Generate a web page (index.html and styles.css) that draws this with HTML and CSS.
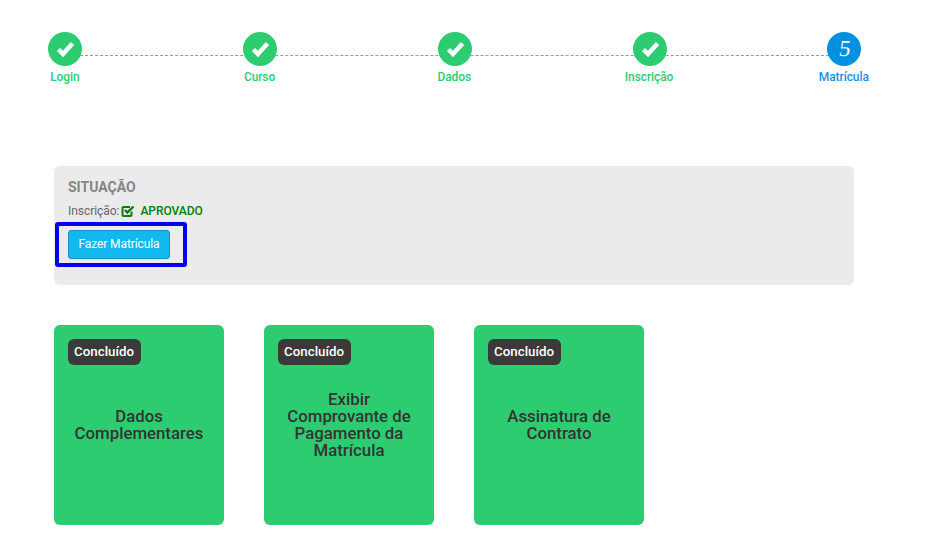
FILE: index.html
```html
<!DOCTYPE html>
<html lang="pt-BR">
<head>
    <meta charset="UTF-8">
    <meta name="viewport" content="width=device-width, initial-scale=1.0">
    <title>Matrícula</title>
    <link rel="stylesheet" href="styles.css">
</head>
<body>
    <div class="stepper">
        <div class="step done">
            <span class="step-circle">
                <svg class="check" viewBox="0 0 20 20"><path d="M3.5 10.5 L8 15 L17.5 4.5" /></svg>
            </span>
            <span class="step-label">Login</span>
        </div>
        <div class="step done">
            <span class="step-circle">
                <svg class="check" viewBox="0 0 20 20"><path d="M3.5 10.5 L8 15 L17.5 4.5" /></svg>
            </span>
            <span class="step-label">Curso</span>
        </div>
        <div class="step done">
            <span class="step-circle">
                <svg class="check" viewBox="0 0 20 20"><path d="M3.5 10.5 L8 15 L17.5 4.5" /></svg>
            </span>
            <span class="step-label">Dados</span>
        </div>
        <div class="step done">
            <span class="step-circle">
                <svg class="check" viewBox="0 0 20 20"><path d="M3.5 10.5 L8 15 L17.5 4.5" /></svg>
            </span>
            <span class="step-label">Inscrição</span>
        </div>
        <div class="step current">
            <span class="step-circle"><span class="step-number">5</span></span>
            <span class="step-label">Matrícula</span>
        </div>
    </div>

    <div class="situacao">
        <h3>SITUAÇÃO</h3>
        <p class="inscricao">
            Inscrição:
            <svg class="check-square" viewBox="0 0 14 14">
                <path class="box" d="M10.5 7.5 V11 a1 1 0 0 1 -1 1 H2.5 a1 1 0 0 1 -1 -1 V4 a1 1 0 0 1 1 -1 H9" />
                <path class="tick" d="M3.8 6 L6.3 8.5 L12.5 2.5" />
            </svg>
            <strong>APROVADO</strong>
        </p>
        <div class="destaque">
            <button type="button">Fazer Matrícula</button>
        </div>
    </div>

    <div class="cards">
        <div class="card">
            <span class="badge">Concluído</span>
            <div class="card-title">Dados Complementares</div>
        </div>
        <div class="card">
            <span class="badge">Concluído</span>
            <div class="card-title">Exibir Comprovante de Pagamento da Matrícula</div>
        </div>
        <div class="card">
            <span class="badge">Concluído</span>
            <div class="card-title">Assinatura de Contrato</div>
        </div>
    </div>
</body>
</html>
```

FILE: styles.css
```css
body {
    margin: 0;
    font-family: Roboto, "Liberation Sans", sans-serif;
    background-color: white;
    color: #333;
}
.stepper {
    position: relative;
    display: flex;
    justify-content: space-between;
    width: 813px;
    margin: 32px 0 0 48.3px;
}
.stepper::before {
    content: "";
    position: absolute;
    left: 17px;
    right: 17px;
    top: 23px;
    border-top: 1px dashed #999;
}
.step {
    position: relative;
    display: flex;
    flex-direction: column;
    align-items: center;
    width: 34px;
}
.step-circle {
    display: flex;
    align-items: center;
    justify-content: center;
    width: 34px;
    height: 34px;
    border-radius: 50%;
    color: white;
    font-family: "Liberation Serif", serif;
    font-size: 23px;
}
.step-number {
    display: inline-block;
    transform: skewX(-7deg);
}
.step-label {
    margin: 3px 1px 0 0;
    font-size: 12px;
    line-height: 16px;
    font-weight: 500;
    letter-spacing: -0.1px;
    white-space: nowrap;
}
.done .step-circle {
    background-color: #2ecc71;
}
.done .step-label {
    color: #2ecc71;
}
.current .step-circle {
    background-color: #0090e0;
}
.current .step-label {
    color: #1a8fe3;
}
.check {
    width: 20px;
    height: 20px;
    fill: none;
    stroke: white;
    stroke-width: 4.5;
}
.situacao {
    box-sizing: border-box;
    width: 800px;
    height: 119px;
    margin: 81px 0 0 54px;
    padding: 13px 14px;
    background-color: #ebebeb;
    border-radius: 6px;
}
.situacao h3 {
    margin: 0;
    font-size: 14px;
    line-height: 17px;
    font-weight: 700;
    color: #858585;
}
.inscricao {
    display: flex;
    align-items: center;
    margin: 7px 0 0;
    font-size: 12px;
    line-height: 16px;
    letter-spacing: -0.05px;
    color: #666;
}
.check-square {
    width: 14px;
    height: 14px;
    margin-left: 2px;
    fill: none;
    stroke: #0a7d0a;
}
.check-square .box {
    stroke-width: 2;
}
.check-square .tick {
    stroke-width: 2.4;
}
.inscricao strong {
    margin-left: 5px;
    font-weight: 500;
    color: #008000;
}
.destaque {
    display: inline-block;
    margin: 3px 0 0 -13px;
    padding: 4px 13px 4px 9px;
    border: 4px solid #0000f0;
    border-radius: 3px;
}
.destaque button {
    display: block;
    width: 102px;
    height: 29px;
    padding: 0 0 2px;
    background-color: #12b8f0;
    color: white;
    border: 1px solid #1a8fc4;
    border-radius: 3px;
    font-family: inherit;
    font-size: 12px;
    letter-spacing: -0.1px;
}
.cards {
    display: flex;
    gap: 40px;
    margin: 40px 0 0 54px;
}
.card {
    position: relative;
    display: flex;
    align-items: center;
    justify-content: center;
    box-sizing: border-box;
    width: 170px;
    height: 200px;
    padding: 0 20px;
    background-color: #2ecc71;
    border-radius: 6px;
}
.badge {
    position: absolute;
    left: 13.6px;
    top: 14px;
    padding: 0 7px 0 6.5px;
    background-color: #3a3a3a;
    color: white;
    border-radius: 6px;
    font-size: 13.3px;
    font-weight: 500;
    line-height: 26px;
}
.card-title {
    font-size: 16.8px;
    line-height: 1;
    font-weight: 500;
    text-align: center;
    color: #333;
}
```
